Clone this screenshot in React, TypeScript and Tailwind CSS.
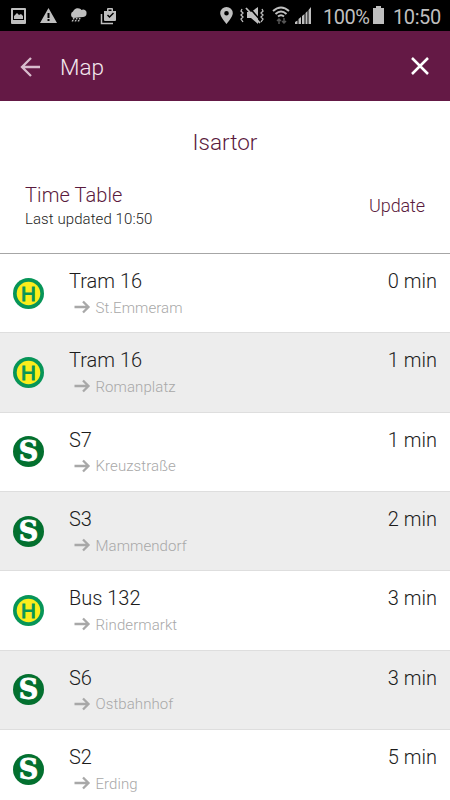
type LineKind = "stop" | "sbahn";

interface Departure {
  line: string;
  destination: string;
  minutes: number;
  kind: LineKind;
}

const DEPARTURES: Departure[] = [
  { line: "Tram 16", destination: "St.Emmeram", minutes: 0, kind: "stop" },
  { line: "Tram 16", destination: "Romanplatz", minutes: 1, kind: "stop" },
  { line: "S7", destination: "Kreuzstraße", minutes: 1, kind: "sbahn" },
  { line: "S3", destination: "Mammendorf", minutes: 2, kind: "sbahn" },
  { line: "Bus 132", destination: "Rindermarkt", minutes: 3, kind: "stop" },
  { line: "S6", destination: "Ostbahnhof", minutes: 3, kind: "sbahn" },
  { line: "S2", destination: "Erding", minutes: 5, kind: "sbahn" },
];

export default function App() {
  return (
    <div className="flex h-[800px] w-[450px] flex-col overflow-hidden bg-white font-['Roboto',sans-serif] font-light text-[#1c1c1c]">
      <StatusBar />
      <NavBar />
      <section className="flex h-[153px] shrink-0 flex-col border-b border-[#a6a6a6] text-[#5a1a3d]">
        <h1 className="mt-[27px] text-center text-[22.500px] leading-7">Isartor</h1>
        <div className="mt-[27px] flex items-center justify-between px-[25px]">
          <div>
            <h2 className="text-[20px] leading-6 tracking-[0.1px]">Time Table</h2>
            <p className="mt-[1px] text-[15px] leading-[22px] tracking-[0.080px] text-[#1c1c1c]">Last updated 10:50</p>
          </div>
          <button className="mb-[2px] text-[18px] leading-6 tracking-[-0.1px]">Update</button>
        </div>
      </section>
      <ul>
        {DEPARTURES.map((departure, i) => (
          <DepartureRow key={i} {...departure} />
        ))}
      </ul>
    </div>
  );
}

function StatusBar() {
  return (
    <div className="flex h-[31px] shrink-0 items-center bg-black text-[#bfbfbf]">
      <svg width="125" height="31" fill="currentColor">
        <path fillRule="evenodd" d="M12 8h13q1 0 1 1v14q0 1-1 1H12q-1 0-1-1V9q0-1 1-1zm1 2v10h11V10zM14 19v-3l3-3 2 2 2-1 2 2v3z" />
        <path fillRule="evenodd" d="M48.500 8 57 23H40zM47.500 13v5h2v-5zm0 6v2h2v-2z" />
        <path d="M73.500 18a3.500 3.500 0 0 1-.5-6.500 5 5 0 0 1 8.500-1.500 3.500 3.500 0 0 1 5 4c0 2-2 3-3.500 3z" />
        <path d="m74 18-2 4m5-4-2 4m5-4-2 4" fill="none" stroke="currentColor" strokeWidth="1.500" strokeDasharray="1.500 .7" />
        <path fillRule="evenodd" d="M104 11h3V9q0-1 1-1h4q1 0 1 1v2h3v9q0 1-1 1h-10q-1 0-1-1zm4.500-1.500V11h3V9.500zm-1.500 6 2.500 2.500 4.500-4.500-1-1-3.500 3.500-1.500-1.500z" />
        <path d="M101.500 14v9.500H113" fill="none" stroke="currentColor" strokeWidth="1.500" />
      </svg>
      <svg className="ml-[85px]" width="110" height="31" fill="currentColor">
        <path fillRule="evenodd" d="M16.500 7a6.300 6.300 0 0 0-6.300 6.300C10.200 17 16.500 24 16.500 24s6.300-7 6.300-10.700A6.300 6.300 0 0 0 16.500 7zm0 4a2.300 2.300 0 1 1 0 4.600 2.300 2.300 0 0 1 0-4.600z" />
        <path d="M37 12h4l7-5v17l-7-6h-4z" />
        <path d="m38 6 13 15" stroke="#000" strokeWidth="1.500" />
        <path d="m36 8 14 15" stroke="currentColor" strokeWidth="1.800" />
        <path d="m32 9-1 2 2 2-2 2 2 2-2 2 2 3M52 9l1 2-2 2 2 2-2 2 2 2-2 3" fill="none" stroke="currentColor" strokeWidth="1.300" />
        <path d="M63 11q8-7 16 0M65.500 14q5.500-5 11 0M68 16.500q3-2.500 6 0" fill="none" stroke="currentColor" strokeWidth="2" />
        <path d="M69 24v-5m-2 2 2-2 2 2M74 18v5m-2-2 2 2 2-2" fill="none" stroke="#555" strokeWidth="1.500" />
        <path d="M85 24v-2l2.500-1.500V24zM88.500 24v-5l2.500-2v7zM92 24v-8l2.500-2v10zM95.500 24V13l2-2v13zM98.500 24V10l2.500-3v17z" />
      </svg>
      <span className="ml-[3px] mt-[2px] w-[49px] text-[20px] font-normal tracking-[-0.5px] whitespace-nowrap">100%</span>
      <svg width="13" height="31" fill="currentColor">
        <path d="M1 8h3V6h5v2h3v16H1z" />
      </svg>
      <span className="ml-[8px] mt-[2px] text-[20px] font-normal tracking-[-0.4px]">10:50</span>
    </div>
  );
}

function NavBar() {
  return (
    <header className="flex h-[70px] shrink-0 items-center bg-[#641945] pl-5 pr-[21px] text-white">
      <svg className="mt-[1px] text-[#d8bccd]" width="21" height="20" fill="none" stroke="currentColor" strokeWidth="2.300">
        <path d="M20 10H2M11 1 2 10l9 9" />
      </svg>
      <span className="ml-[19px] mt-[3px] text-[22.500px] text-[#f3e8ee]">Map</span>
      <svg className="ml-auto" width="18" height="18" fill="none" stroke="currentColor" strokeWidth="2.500">
        <path d="m1 1 16 16M17 1 1 17" />
      </svg>
    </header>
  );
}

function DepartureRow({ line, destination, minutes, kind }: Departure) {
  return (
    <li className="flex h-[79.350px] border-b border-[#dedede] pl-[13px] pr-[13px] even:bg-[#ededed]">
      <div className="mt-[23.500px] h-[31px] w-[31px]">
        {kind === "stop" ? <StopSign /> : <SBahnSign />}
      </div>
      <div className="ml-[25px] mt-[14px]">
        <p className="text-[20px] leading-[26px]">{line}</p>
        <p className="ml-[5px] mt-[1.500px] flex items-center text-[15px] leading-6 tracking-[0.080px] text-[#a8a8a8]">
          <svg className="mb-[1px]" width="17" height="14" fill="none" stroke="currentColor" strokeWidth="2.300">
            <path d="M0.500 7h14.500M9 1.500 14.500 7 9 12.500" />
          </svg>
          <span className="ml-[4.500px]">{destination}</span>
        </p>
      </div>
      <span className="ml-auto mt-[14px] text-[20px] leading-[26px]">{minutes} min</span>
    </li>
  );
}

function StopSign() {
  return (
    <svg width="31" height="31" viewBox="0 0 31 31">
      <circle cx="15.500" cy="15.500" r="15.500" fill="#079558" />
      <circle cx="15.500" cy="15.500" r="11.800" fill="#fbed1c" />
      <text x="15.500" y="22.500" textAnchor="middle" fill="#079558" stroke="#079558" strokeWidth="1" className="font-['Liberation_Sans',sans-serif] text-[20.500px] font-normal">H</text>
    </svg>
  );
}

function SBahnSign() {
  return (
    <svg width="31" height="31" viewBox="0 0 31 31">
      <circle cx="15.500" cy="15.500" r="15.500" fill="#03702f" />
      <text x="15.500" y="25.300" textAnchor="middle" fill="#fff" stroke="#fff" strokeWidth="0.900" className="font-['DejaVu_Serif',serif] text-[27px] font-bold">S</text>
    </svg>
  );
}
